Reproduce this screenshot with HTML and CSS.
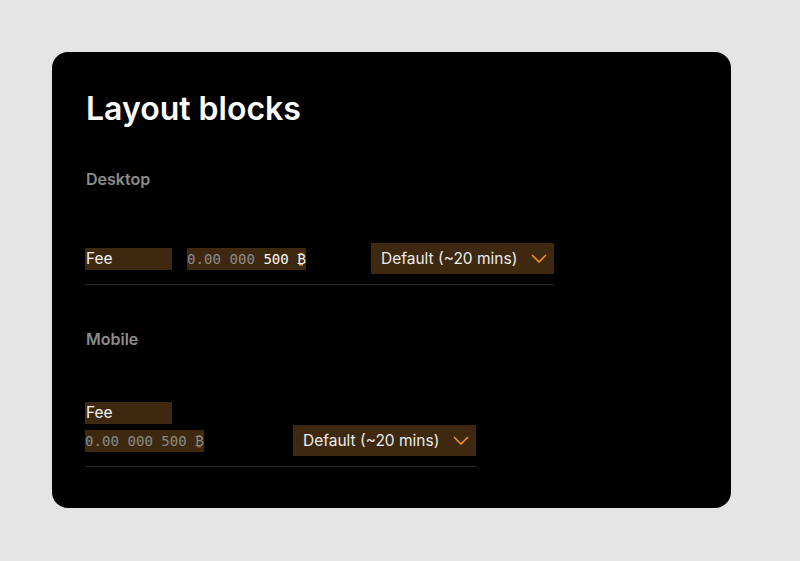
FILE: index.html
```html
<!DOCTYPE html>
<html lang="en">
<head>
<meta charset="utf-8">
<title>Layout blocks</title>
<link rel="stylesheet" href="styles.css">
</head>
<body>
<main class="card">
  <h1 class="title">Layout blocks</h1>

  <section class="block">
    <h2 class="label">Desktop</h2>
    <div class="row row-desktop">
      <span class="fee">Fee</span>
      <span class="amount"><span class="dim">0.00 000</span> 500 ₿</span>
      <div class="select">
        <span>Default (~20 mins)</span>
        <svg class="chev" width="16" height="9" viewBox="0 0 16 9"><path d="M1 1 L8 8 L15 1" fill="none" stroke="#f7931a" stroke-width="1.6"/></svg>
      </div>
    </div>
  </section>

  <section class="block block-mobile">
    <h2 class="label">Mobile</h2>
    <div class="stack">
      <span class="fee">Fee</span>
      <div class="row row-mobile">
        <span class="amount dim">0.00 000 500 ₿</span>
        <div class="select">
          <span>Default (~20 mins)</span>
          <svg class="chev" width="16" height="9" viewBox="0 0 16 9"><path d="M1 1 L8 8 L15 1" fill="none" stroke="#f7931a" stroke-width="1.6"/></svg>
        </div>
      </div>
    </div>
  </section>
</main>
</body>
</html>
```

FILE: styles.css
```css
html, body {
  margin: 0;
  padding: 0;
  background: #e5e5e5;
}
body {
  font-family: Inter, "Noto Sans", sans-serif;
  padding: 52px 0 0 52px;
}
.card {
  box-sizing: border-box;
  width: 679px;
  height: 456px;
  background: #000;
  border-radius: 16px;
  padding: 37px 34px 0 33px;
  color: #f2f2f2;
}
.title {
  margin: 0 0 0 1px;
  font-size: 32px;
  line-height: 40px;
  font-weight: 600;
  color: #fff;
}
.label {
  margin: 40px 0 0 1px;
  font-size: 16px;
  line-height: 20px;
  font-weight: 600;
  color: #8c8c8c;
}
.block-mobile .label {
  margin-top: 44px;
}
.row {
  display: flex;
  align-items: center;
  border-bottom: 1px solid #2a2a2a;
  padding-bottom: 10px;
}
.row-desktop {
  margin-top: 54px;
  width: 469px;
}
.fee {
  display: block;
  box-sizing: border-box;
  width: 87px;
  height: 22px;
  line-height: 22px;
  padding-left: 1px;
  background: #3e2910;
  font-size: 15.5px;
  color: #f5f5f5;
  flex: none;
}
.amount {
  display: block;
  height: 22px;
  line-height: 22px;
  background: #3e2910;
  font-family: "DejaVu Sans Mono", "Liberation Mono", monospace;
  font-size: 14.1px;
  color: #f5f5f5;
  flex: none;
}
.dim {
  color: #8a8a8a;
}
.row-desktop .amount {
  margin-left: 15px;
}
.select {
  box-sizing: border-box;
  width: 183px;
  height: 31px;
  display: flex;
  align-items: center;
  justify-content: space-between;
  padding: 0 7px 0 10px;
  background: #3e2910;
  font-size: 15.5px;
  color: #ececec;
  flex: none;
}
.row-desktop .select {
  margin-left: auto;
}
.chev {
  display: block;
}
.stack {
  margin-top: 53px;
  width: 391px;
}
.row-mobile {
  margin-top: 1px;
  justify-content: space-between;
}
```
